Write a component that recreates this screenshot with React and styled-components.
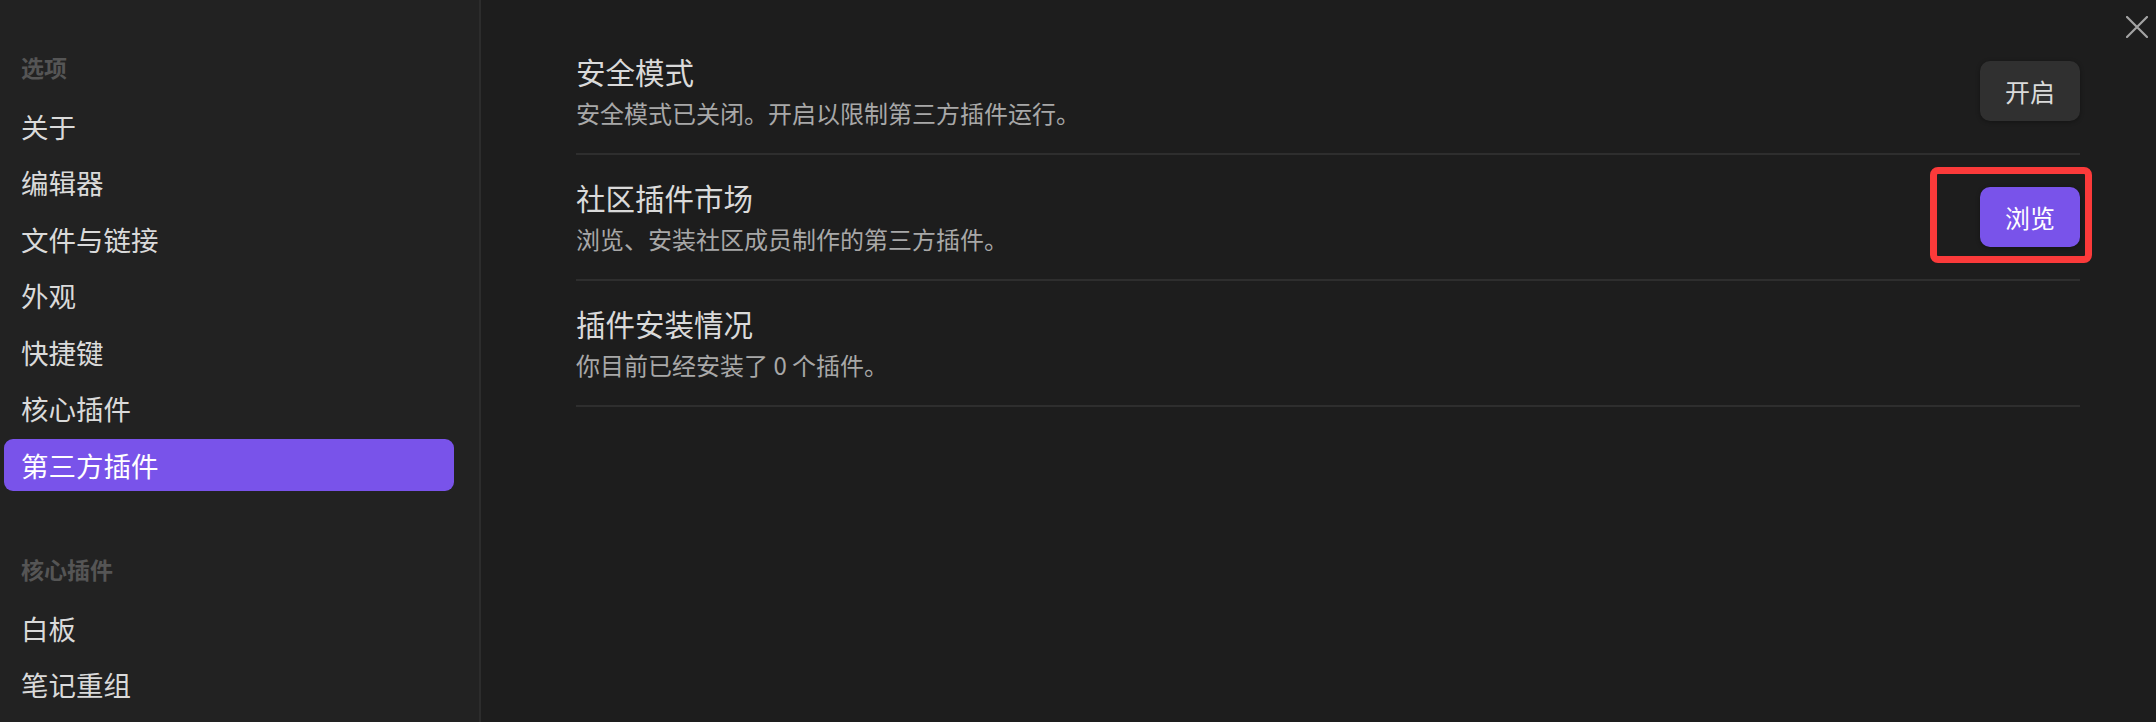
import React from 'react'
import styled, { createGlobalStyle } from 'styled-components'

const navSections = [
  {
    title: '选项',
    items: ['关于', '编辑器', '文件与链接', '外观', '快捷键', '核心插件', '第三方插件'],
  },
  {
    title: '核心插件',
    items: ['白板', '笔记重组'],
  },
]

const settings = [
  {
    name: '安全模式',
    desc: '安全模式已关闭。开启以限制第三方插件运行。',
    action: { label: '开启', cta: false },
  },
  {
    name: '社区插件市场',
    desc: '浏览、安装社区成员制作的第三方插件。',
    action: { label: '浏览', cta: true, marked: true },
  },
  {
    name: '插件安装情况',
    desc: '你目前已经安装了 0 个插件。',
  },
]

function App() {
  const active = '第三方插件'

  return (
    <>
      <GlobalStyle />
      <Modal>
        <Sidebar>
          {navSections.map((section, i) => (
            <NavGroup key={section.title} first={i === 0}>
              <NavHeader>{section.title}</NavHeader>
              {section.items.map(item => (
                <NavItem key={item} active={i === 0 && item === active}>
                  {item}
                </NavItem>
              ))}
            </NavGroup>
          ))}
        </Sidebar>
        <Content>
          {settings.map(setting => (
            <SettingRow key={setting.name}>
              <SettingInfo>
                <SettingName>{setting.name}</SettingName>
                <SettingDesc>{setting.desc}</SettingDesc>
              </SettingInfo>
              {setting.action && (
                <Control>
                  <Button cta={setting.action.cta}>{setting.action.label}</Button>
                  {setting.action.marked && <Highlight />}
                </Control>
              )}
            </SettingRow>
          ))}
        </Content>
        <CloseButton aria-label="关闭">
          <svg width="22" height="22" viewBox="0 0 22 22" fill="none">
            <path d="M1 1 L21 21 M21 1 L1 21" stroke="#a3a3a3" strokeWidth="2.2" strokeLinecap="round" />
          </svg>
        </CloseButton>
      </Modal>
    </>
  )
}

export default App

// #region styles
const GlobalStyle = createGlobalStyle`
  html, body {
    margin: 0;
    padding: 0;
    background: #1d1d1d;
  }
  body {
    font-family: "Noto Sans CJK SC", "Noto Sans", sans-serif;
  }
`

const Modal = styled.div`
  position: relative;
  display: flex;
  width: 2156px;
  height: 722px;
  overflow: hidden;
  background: #1d1d1d;
`

const Sidebar = styled.nav`
  width: 450px;
  flex-shrink: 0;
  padding: 44px 25px 0 4px;
  background: #222222;
  border-right: 2px solid #2c2c2c;
`

const NavGroup = styled.div`
  display: flex;
  flex-direction: column;
  gap: 4.5px;
  margin-top: ${props => (props.first ? '0' : '55.5px')};
`

const NavHeader = styled.div`
  height: 46px;
  line-height: 46px;
  margin-bottom: 5px;
  padding-left: 17px;
  font-size: 23px;
  font-weight: 600;
  color: #555555;
`

const NavItem = styled.div`
  height: 52px;
  line-height: 52px;
  padding-left: 17px;
  border-radius: 9px;
  font-size: 27.5px;
  color: ${props => (props.active ? '#ffffff' : '#dadada')};
  background: ${props => (props.active ? '#7953ea' : 'transparent')};
`

const Content = styled.main`
  flex: 1;
  padding: 29px 76px 0 95px;
`

const SettingRow = styled.div`
  display: flex;
  align-items: center;
  gap: 24px;
  padding: 22px 0;
  border-bottom: 2px solid #2e2e2e;
`

const SettingInfo = styled.div`
  flex: 1;
`

const SettingName = styled.div`
  font-size: 29.5px;
  line-height: 40px;
  color: #dadada;
`

const SettingDesc = styled.div`
  margin-top: 4px;
  font-size: 24px;
  line-height: 36px;
  color: #a8a8a8;
`

const Control = styled.div`
  position: relative;
  display: flex;
`

const Button = styled.button`
  height: 60px;
  padding: 0 25px;
  border: none;
  border-radius: 10px;
  font-family: inherit;
  font-size: 25px;
  color: ${props => (props.cta ? '#ffffff' : '#dadada')};
  background: ${props => (props.cta ? '#7953ea' : '#303030')};
  box-shadow: 0 1px 4px rgba(0, 0, 0, 0.35);
`

const Highlight = styled.span`
  position: absolute;
  top: -20px;
  bottom: -16px;
  left: -50px;
  right: -12px;
  border: 7px solid #fb3a3a;
  border-radius: 8px;
  pointer-events: none;
`

const CloseButton = styled.button`
  position: absolute;
  top: 16px;
  right: 8px;
  display: flex;
  padding: 0;
  border: none;
  background: transparent;
`
// #endregion
